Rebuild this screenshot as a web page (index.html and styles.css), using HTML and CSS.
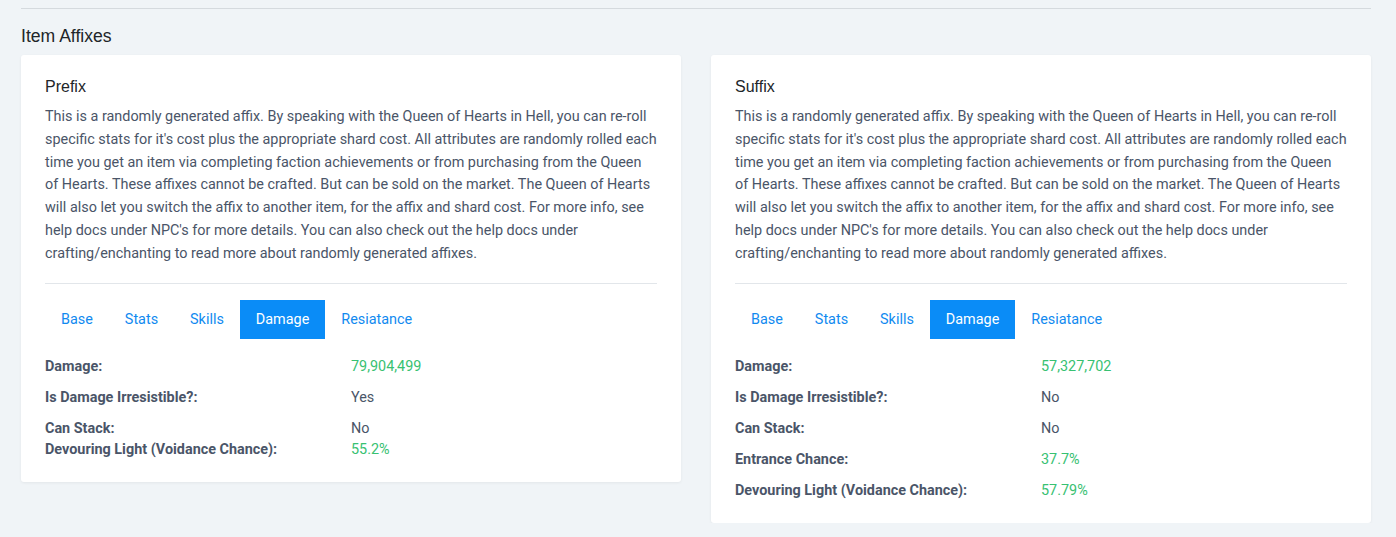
FILE: index.html
```html
<!DOCTYPE html>
<html lang="en">
<head>
<meta charset="utf-8">
<title>Item Affixes</title>
<link rel="stylesheet" href="styles.css">
</head>
<body>
<div class="page">
  <hr class="divider">
  <h3 class="section-title">Item Affixes</h3>
  <div class="affix-grid">
    <div class="card">
      <h5 class="card-title">Prefix</h5>
      <p class="desc">This is a randomly generated affix. By speaking with the Queen of Hearts in Hell, you can re-roll specific stats for it's cost plus the appropriate shard cost. All attributes are randomly rolled each time you get an item via completing faction achievements or from purchasing from the Queen of Hearts. These affixes cannot be crafted. But can be sold on the market. The Queen of Hearts will also let you switch the affix to another item, for the affix and shard cost. For more info, see help docs under NPC's for more details. You can also check out the help docs under crafting/enchanting to read more about randomly generated affixes.</p>
      <hr class="card-sep">
      <div class="tabs">
        <span class="tab">Base</span>
        <span class="tab">Stats</span>
        <span class="tab">Skills</span>
        <span class="tab active">Damage</span>
        <span class="tab">Resiatance</span>
      </div>
      <dl class="stats">
        <dt>Damage:</dt><dd class="good">79,904,499</dd>
        <dt>Is Damage Irresistible?:</dt><dd>Yes</dd>
        <dt class="tight">Can Stack:</dt><dd class="tight">No</dd>
        <dt>Devouring Light (Voidance Chance):</dt><dd class="good">55.2%</dd>
      </dl>
    </div>
    <div class="card">
      <h5 class="card-title">Suffix</h5>
      <p class="desc">This is a randomly generated affix. By speaking with the Queen of Hearts in Hell, you can re-roll specific stats for it's cost plus the appropriate shard cost. All attributes are randomly rolled each time you get an item via completing faction achievements or from purchasing from the Queen of Hearts. These affixes cannot be crafted. But can be sold on the market. The Queen of Hearts will also let you switch the affix to another item, for the affix and shard cost. For more info, see help docs under NPC's for more details. You can also check out the help docs under crafting/enchanting to read more about randomly generated affixes.</p>
      <hr class="card-sep">
      <div class="tabs">
        <span class="tab">Base</span>
        <span class="tab">Stats</span>
        <span class="tab">Skills</span>
        <span class="tab active">Damage</span>
        <span class="tab">Resiatance</span>
      </div>
      <dl class="stats">
        <dt>Damage:</dt><dd class="good">57,327,702</dd>
        <dt>Is Damage Irresistible?:</dt><dd>No</dd>
        <dt>Can Stack:</dt><dd>No</dd>
        <dt>Entrance Chance:</dt><dd class="good">37.7%</dd>
        <dt>Devouring Light (Voidance Chance):</dt><dd class="good">57.79%</dd>
      </dl>
    </div>
  </div>
</div>
</body>
</html>
```
FILE: styles.css
```css
* { box-sizing: border-box; }
html, body { margin: 0; padding: 0; }
body {
  background: #f0f4f7;
  font-family: Roboto, "Liberation Sans", Arial, sans-serif;
  color: #4a5568;
  font-size: 14.4px;
}
.page {
  padding: 8px 25px 0 21px;
}
.divider {
  margin: 0;
  border: 0;
  border-top: 1px solid #d5dade;
}
.section-title {
  font-family: "Liberation Sans", Arial, sans-serif;
  font-weight: 400;
  font-size: 17.6px;
  line-height: 21px;
  color: #212529;
  margin: 17px 0 8px;
}
.affix-grid {
  display: grid;
  grid-template-columns: 1fr 1fr;
  gap: 30px;
  align-items: start;
}
.card {
  background: #fff;
  border-radius: 3px;
  box-shadow: 0 1px 3px rgba(0, 0, 0, 0.06);
  padding: 22px 24px 22px;
}
.card-title {
  font-family: "Liberation Sans", Arial, sans-serif;
  font-weight: 400;
  font-size: 16px;
  line-height: 19px;
  color: #212529;
  margin: 0 0 10px;
}
.desc {
  margin: 0;
  line-height: 22.75px;
  color: #4a5568;
}
.card-sep {
  margin: 18px 0 16px;
  border: 0;
  border-top: 1px solid #e2e6ea;
}
.tabs {
  display: flex;
  margin-bottom: 17px;
}
.tab {
  padding: 9px 16px;
  line-height: 21px;
  color: #118af0;
}
.tab.active {
  background: #0a8cf7;
  color: #fff;
}
.stats {
  display: grid;
  grid-template-columns: 1fr 1fr;
  row-gap: 10px;
  margin: 0;
  line-height: 21px;
}
.stats dt {
  font-weight: 700;
  color: #4a5568;
}
.stats dd {
  margin: 0;
  color: #4a5568;
}
.stats .tight { margin-bottom: -10px; }
.stats dd.good { color: #38c172; }
```
